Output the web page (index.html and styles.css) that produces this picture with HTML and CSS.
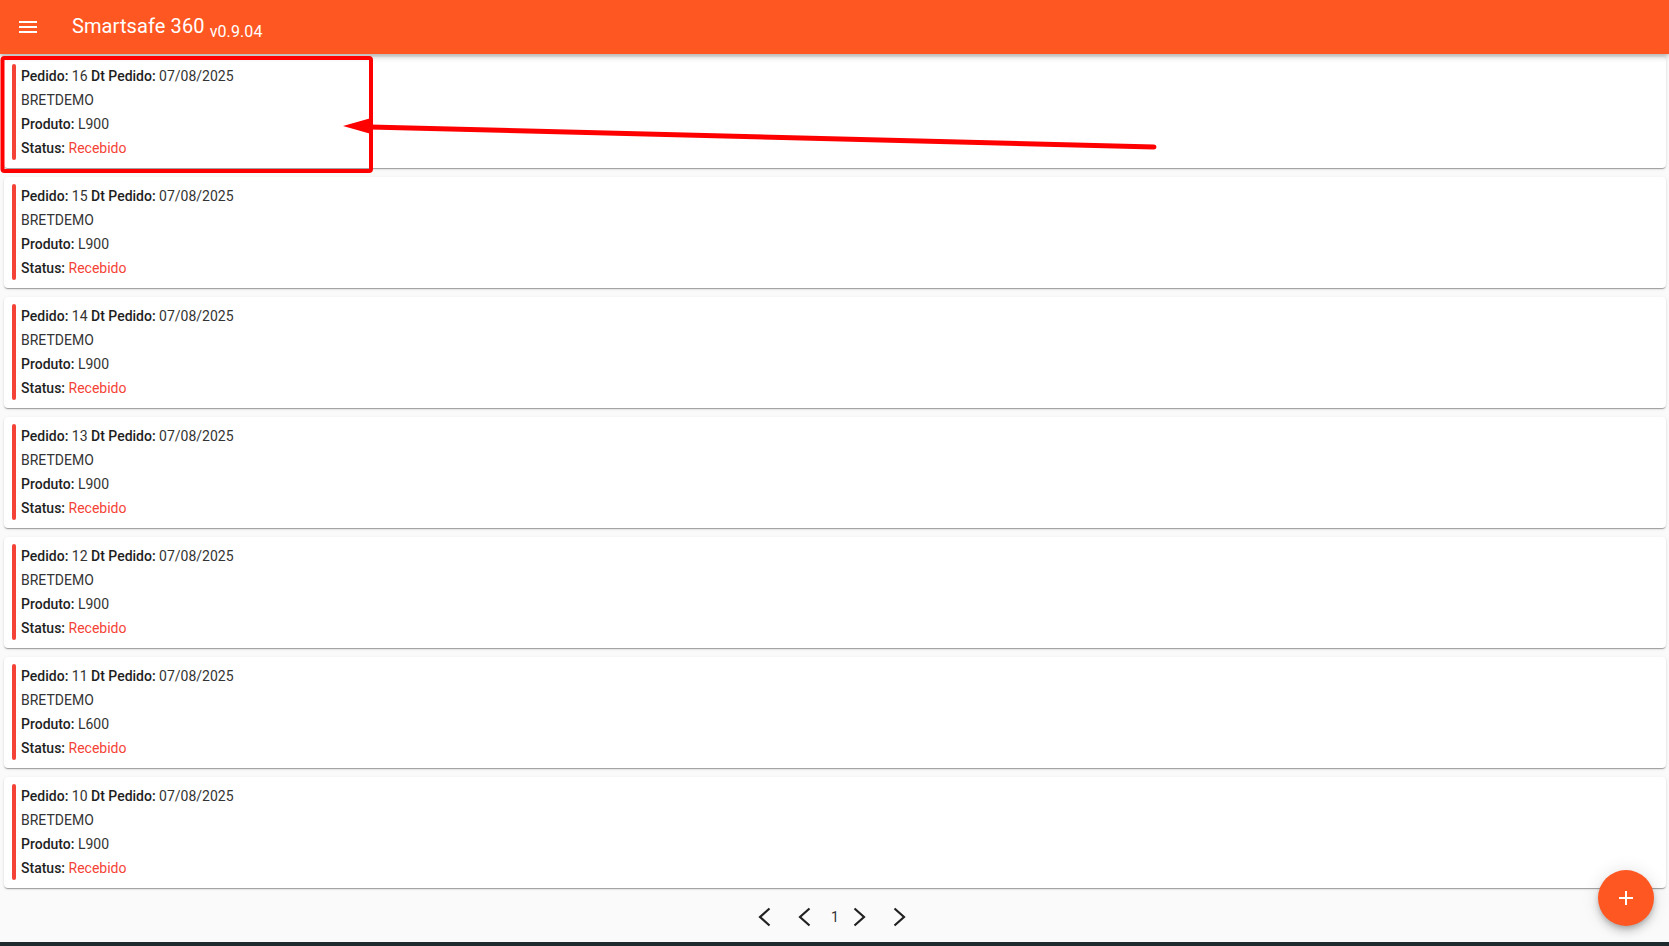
FILE: index.html
```html
<!DOCTYPE html>
<html lang="pt-BR">
<head>
  <meta charset="UTF-8">
  <title>Smartsafe 360</title>
  <link rel="stylesheet" href="styles.css">
</head>
<body>
  <div class="app">
    <header class="toolbar">
      <button class="menu-button" aria-label="Menu">
        <svg width="24" height="24" viewBox="0 0 24 24"><path d="M3 18h18v-2H3v2zm0-5h18v-2H3v2zm0-7v2h18V6H3z" fill="#fff"/></svg>
      </button>
      <span class="title">Smartsafe 360 <small class="version">v0.9.04</small></span>
    </header>

    <main class="order-list">
      <div class="order-card">
        <div class="status-bar"></div>
        <div class="order-info">
          <div><b>Pedido:</b> 16 <b>Dt Pedido:</b> 07/08/2025</div>
          <div>BRETDEMO</div>
          <div><b>Produto:</b> L900</div>
          <div><b>Status:</b> <span class="status">Recebido</span></div>
        </div>
      </div>
      <div class="order-card">
        <div class="status-bar"></div>
        <div class="order-info">
          <div><b>Pedido:</b> 15 <b>Dt Pedido:</b> 07/08/2025</div>
          <div>BRETDEMO</div>
          <div><b>Produto:</b> L900</div>
          <div><b>Status:</b> <span class="status">Recebido</span></div>
        </div>
      </div>
      <div class="order-card">
        <div class="status-bar"></div>
        <div class="order-info">
          <div><b>Pedido:</b> 14 <b>Dt Pedido:</b> 07/08/2025</div>
          <div>BRETDEMO</div>
          <div><b>Produto:</b> L900</div>
          <div><b>Status:</b> <span class="status">Recebido</span></div>
        </div>
      </div>
      <div class="order-card">
        <div class="status-bar"></div>
        <div class="order-info">
          <div><b>Pedido:</b> 13 <b>Dt Pedido:</b> 07/08/2025</div>
          <div>BRETDEMO</div>
          <div><b>Produto:</b> L900</div>
          <div><b>Status:</b> <span class="status">Recebido</span></div>
        </div>
      </div>
      <div class="order-card">
        <div class="status-bar"></div>
        <div class="order-info">
          <div><b>Pedido:</b> 12 <b>Dt Pedido:</b> 07/08/2025</div>
          <div>BRETDEMO</div>
          <div><b>Produto:</b> L900</div>
          <div><b>Status:</b> <span class="status">Recebido</span></div>
        </div>
      </div>
      <div class="order-card">
        <div class="status-bar"></div>
        <div class="order-info">
          <div><b>Pedido:</b> 11 <b>Dt Pedido:</b> 07/08/2025</div>
          <div>BRETDEMO</div>
          <div><b>Produto:</b> L600</div>
          <div><b>Status:</b> <span class="status">Recebido</span></div>
        </div>
      </div>
      <div class="order-card">
        <div class="status-bar"></div>
        <div class="order-info">
          <div><b>Pedido:</b> 10 <b>Dt Pedido:</b> 07/08/2025</div>
          <div>BRETDEMO</div>
          <div><b>Produto:</b> L900</div>
          <div><b>Status:</b> <span class="status">Recebido</span></div>
        </div>
      </div>
    </main>

    <nav class="pager">
      <button class="pager-button first" aria-label="Primeira">
        <svg width="24" height="24" viewBox="0 0 24 24"><polyline points="17.5,3.5 8,12 17.5,20.5" fill="none" stroke="#212121" stroke-width="2.2"/></svg>
      </button>
      <button class="pager-button" aria-label="Anterior">
        <svg width="24" height="24" viewBox="0 0 24 24"><polyline points="17.5,3.5 8,12 17.5,20.5" fill="none" stroke="#212121" stroke-width="2.2"/></svg>
      </button>
      <span class="page-number">1</span>
      <button class="pager-button" aria-label="Próxima">
        <svg width="24" height="24" viewBox="0 0 24 24"><polyline points="6.5,3.5 16,12 6.5,20.5" fill="none" stroke="#212121" stroke-width="2.2"/></svg>
      </button>
      <button class="pager-button last" aria-label="Última">
        <svg width="24" height="24" viewBox="0 0 24 24"><polyline points="6.5,3.5 16,12 6.5,20.5" fill="none" stroke="#212121" stroke-width="2.2"/></svg>
      </button>
    </nav>

    <div class="taskbar"></div>
  </div>

  <button class="fab" aria-label="Novo pedido">
    <svg width="24" height="24" viewBox="0 0 24 24"><path d="M19 13h-6v6h-2v-6H5v-2h6V5h2v6h6v2z" fill="#fff"/></svg>
  </button>

  <!-- marcação vermelha por cima do primeiro pedido -->
  <svg class="annotation" width="1669" height="946" viewBox="0 0 1669 946">
    <rect x="2.5" y="58" width="368.5" height="113" rx="2" fill="none" stroke="#ff0000" stroke-width="4"/>
    <line x1="370" y1="127" x2="1154" y2="147" stroke="#ff0000" stroke-width="5" stroke-linecap="round"/>
    <polygon points="343,126 373,117.5 373,134.5" fill="#ff0000"/>
  </svg>
</body>
</html>
```

FILE: styles.css
```css
* {
  box-sizing: border-box;
}

body {
  margin: 0;
  padding: 0;
  background: #fafafa;
  font-family: Roboto, 'Noto Sans', sans-serif;
  overflow: hidden;
}

.app {
  display: flex;
  flex-direction: column;
  height: 100vh;
}

button {
  border: none;
  background: none;
  padding: 0;
  cursor: pointer;
}

/* Barra superior */
.toolbar {
  height: 54px;
  flex: none;
  display: flex;
  align-items: center;
  padding-left: 16px;
  background: #ff5722;
  color: #fff;
  box-shadow: 0 2px 4px -1px rgba(0, 0, 0, 0.2), 0 4px 5px 0 rgba(0, 0, 0, 0.14);
  position: relative;
  z-index: 2;
}

.menu-button {
  width: 24px;
  height: 24px;
  display: flex;
}

.title {
  margin-left: 32px;
  font-size: 20px;
  font-weight: 400;
  letter-spacing: 0.1px;
}

.version {
  font-size: 16px;
  vertical-align: -4px;
}

/* Lista de pedidos */
.order-list {
  flex: 1;
  display: flex;
  flex-direction: column;
  gap: 9px;
  padding: 3px 3px 0 4px;
}

.order-card {
  height: 111px;
  display: flex;
  gap: 5px;
  padding: 7px 8px 8px 8px;
  background: #fff;
  border-radius: 4px;
  box-shadow: 0 2px 1px -1px rgba(0, 0, 0, 0.2), 0 1px 1px 0 rgba(0, 0, 0, 0.14), 0 1px 3px 0 rgba(0, 0, 0, 0.12);
}

.status-bar {
  width: 4px;
  flex: none;
  border-radius: 2px;
  background: #f44336;
}

.order-info {
  font-size: 14px;
  line-height: 24px;
  color: #333;
}

.order-info b {
  font-weight: 500;
  color: #1f1f1f;
}

.status {
  color: #f44336;
}

/* Paginação */
.pager {
  height: 54px;
  flex: none;
  display: flex;
  align-items: center;
  justify-content: center;
  padding: 4px 5px 0 0;
}

.pager-button {
  width: 24px;
  height: 24px;
  display: flex;
}

.pager-button.first {
  margin-right: 16px;
}

.pager-button.last {
  margin-left: 16px;
}

.page-number {
  font-size: 14px;
  color: #333;
  margin: 0 9px 0 15px;
}

.taskbar {
  height: 4px;
  flex: none;
  background: #1f2a2e;
}

/* Botão flutuante */
.fab {
  position: fixed;
  right: 15px;
  bottom: 20px;
  width: 56px;
  height: 56px;
  border-radius: 50%;
  background: #ff5722;
  display: flex;
  align-items: center;
  justify-content: center;
  box-shadow: 0 3px 5px -1px rgba(0, 0, 0, 0.2), 0 6px 10px 0 rgba(0, 0, 0, 0.14), 0 1px 18px 0 rgba(0, 0, 0, 0.12);
  z-index: 5;
}

.annotation {
  position: absolute;
  top: 0;
  left: 0;
  pointer-events: none;
  z-index: 10;
}
```
